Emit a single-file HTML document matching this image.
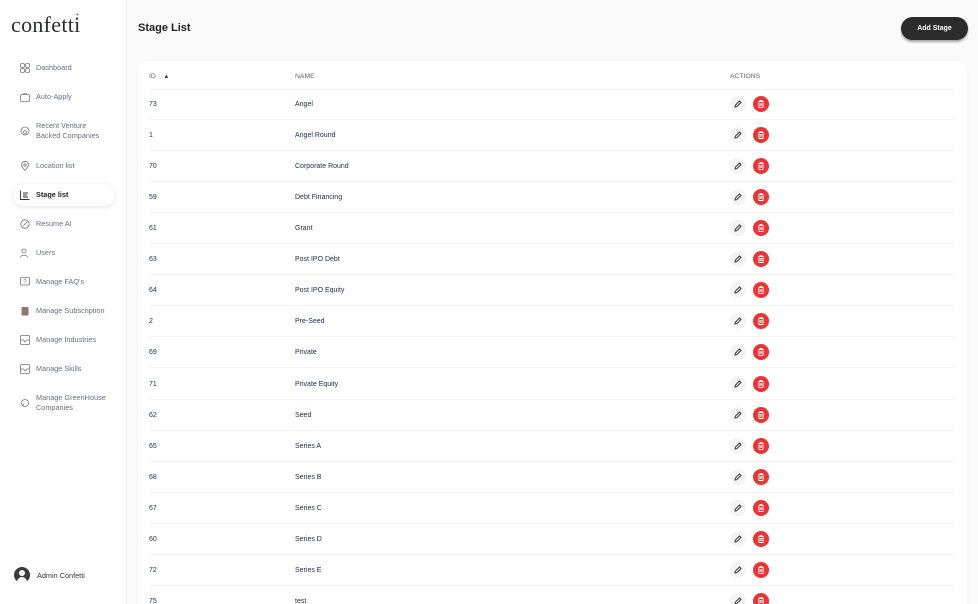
<!DOCTYPE html>
<html style="overflow:hidden;height:604px"><head><style>
*{box-sizing:border-box;margin:0;padding:0}
body{width:978px;height:604px;overflow:hidden;background:#fafafa;font-family:"Liberation Sans",sans-serif;position:relative}
.side{position:absolute;left:0;top:0;width:127px;height:604px;background:#fff;border-right:1px solid #f0f0f0}
.logo{position:absolute;left:11px;top:12px;font-family:"Liberation Serif",serif;font-size:22px;color:#2b2b33;letter-spacing:0.3px}
.nav{position:absolute;left:13px;width:102px;font-size:7.3px;color:#6b6f7a;display:flex;align-items:center;line-height:10px}
.nav svg{position:absolute;left:7px;width:10px;height:10px}
.nav span{margin-left:23px}
.active{background:#fff;border-radius:12px;box-shadow:0 1px 4px rgba(0,0,0,0.12);height:22px;color:#222;font-weight:bold}
h1{position:absolute;left:138px;top:22px;font-size:11px;color:#222;font-weight:bold}
.btn{position:absolute;left:901px;top:17px;width:67px;height:23px;border-radius:12px;background:#2b2b2b;color:#fff;font-size:7px;font-weight:bold;text-align:center;line-height:23px;box-shadow:0 2px 2px rgba(0,0,0,0.35)}
.card{position:absolute;left:138px;top:61px;width:829px;height:560px;background:#fff;border-radius:9px;box-shadow:0 0 3px rgba(0,0,0,0.04)}
.row{position:absolute;left:11px;width:806px;height:31px;border-bottom:1px solid #f1f1f1;font-size:7px;color:#1e2a4a;}
.row div{position:absolute;top:0;line-height:31px}
.hd{color:#666;font-size:6.8px}
.ed{position:absolute;width:16px;height:16px;border-radius:50%;background:#f3f3f3;left:581px;top:7px}
.dl{position:absolute;width:16px;height:16px;border-radius:50%;background:#ee3333;left:604px;top:7px}
.ed svg,.dl svg{position:absolute;left:4px;top:4px;width:8px;height:8px}
.user{position:absolute;left:14px;top:567px;width:16px;height:16px;border-radius:50%;background:#3a3a3a;overflow:hidden}
</style></head><body>
<div class="side">
<div class="logo">confetti<span style="position:absolute;left:64px;top:-2px;font-size:8px;color:#e33">+</span></div>
<div class="nav" style="top:63px"><svg viewBox="0 0 10 10" fill="none" stroke="#777" stroke-width=".8"><rect x=".5" y=".5" width="4" height="4" rx="1.5"/><rect x="5.5" y=".5" width="4" height="4" rx="1.5"/><rect x=".5" y="5.5" width="4" height="4" rx="1.5"/><rect x="5.5" y="5.5" width="4" height="4" rx="1.5"/></svg><span>Dashboard</span></div>
<div class="nav" style="top:92px"><svg viewBox="0 0 10 10" fill="none" stroke="#777" stroke-width=".8"><rect x=".5" y="2.5" width="9" height="7" rx="1.5"/><path d="M3 2.5Q5 0 7 2.5"/></svg><span>Auto-Apply</span></div>
<div class="nav" style="top:121px;height:20px"><svg viewBox="0 0 10 10" fill="none" stroke="#777" stroke-width=".8"><circle cx="5" cy="5" r="4"/><circle cx="5" cy="6" r="1.5"/></svg><span>Recent Venture<br>Backed Companies</span></div>
<div class="nav" style="top:161px"><svg viewBox="0 0 10 10" fill="none" stroke="#777" stroke-width=".8"><path d="M5 9.5C2 6 1.5 5 1.5 3.8a3.5 3.5 0 0 1 7 0C8.5 5 8 6 5 9.5z"/><circle cx="5" cy="4" r="1.2"/></svg><span>Location list</span></div>
<div class="nav active" style="top:184px"><svg viewBox="0 0 10 10" fill="none" stroke="#333" stroke-width=".9"><path d="M.5 .5V9.5H9.5M3 3h5M3 5h4M3 7h5"/></svg><span>Stage list</span></div>
<div class="nav" style="top:219px"><svg viewBox="0 0 10 10" fill="none" stroke="#777" stroke-width=".8"><circle cx="5" cy="5" r="4.2"/><path d="M3.5 6.5l4-4"/></svg><span>Resume AI</span></div>
<div class="nav" style="top:248px"><svg viewBox="0 0 10 10" fill="none" stroke="#777" stroke-width=".8"><circle cx="4" cy="3" r="2"/><path d="M.5 9.5c0-3 7-3 7 0"/></svg><span>Users</span></div>
<div class="nav" style="top:277px"><svg viewBox="0 0 10 10" fill="none" stroke="#777" stroke-width=".8"><rect x=".5" y=".5" width="9" height="7.5" rx="1"/><text x="3.3" y="6.5" font-size="6" fill="#777" stroke="none">?</text></svg><span>Manage FAQ's</span></div>
<div class="nav" style="top:306px"><svg viewBox="0 0 10 10" fill="#8a7a70"><rect x="1.5" y="1" width="7" height="8.5" rx="1"/></svg><span>Manage Subscription</span></div>
<div class="nav" style="top:335px"><svg viewBox="0 0 10 10" fill="none" stroke="#777" stroke-width=".8"><rect x=".5" y=".5" width="9" height="9" rx="1"/><path d="M.5 5h3l1.5 2 1.5-2h3"/></svg><span>Manage Industries</span></div>
<div class="nav" style="top:364px"><svg viewBox="0 0 10 10" fill="none" stroke="#777" stroke-width=".8"><rect x=".5" y=".5" width="9" height="9" rx="1"/><path d="M.5 5h3l1.5 2 1.5-2h3"/></svg><span>Manage Skills</span></div>
<div class="nav" style="top:393px;height:20px"><svg viewBox="0 0 10 10" fill="none" stroke="#777" stroke-width=".8"><circle cx="5" cy="5" r="3.5"/><path d="M2 8l2-2"/></svg><span>Manage GreenHouse<br>Companies</span></div>
<div class="user"><div style="position:absolute;left:5px;top:3px;width:6px;height:6px;border-radius:50%;background:#fff"></div><div style="position:absolute;left:3px;top:10px;width:10px;height:8px;border-radius:5px 5px 0 0;background:#fff"></div></div>
<div style="position:absolute;left:37px;top:571px;font-size:7.3px;color:#333">Admin Confetti</div>
</div>
<h1>Stage List</h1>
<div class="btn">Add Stage</div>
<div class="card">
<div class="row hd" style="top:1px;height:28px"><div style="left:0;line-height:30px">ID &nbsp;&nbsp;&nbsp;<span style="font-size:6px;color:#333">▲</span></div><div style="left:146px;line-height:30px">NAME</div><div style="left:581px;line-height:30px">ACTIONS</div></div>
</div>
<script>
const d=[["73","Angel"],["1","Angel Round"],["70","Corporate Round"],["59","Debt Financing"],["61","Grant"],["63","Post IPO Debt"],["64","Post IPO Equity"],["2","Pre-Seed"],["69","Private"],["71","Private Equity"],["62","Seed"],["65","Series A"],["68","Series B"],["67","Series C"],["60","Series D"],["72","Series E"],["75","test"]];
let h="";d.forEach((r,i)=>{h+=`<div class="row" style="top:${28+i*31.06}px"><div style="left:0">${r[0]}</div><div style="left:146px">${r[1]}</div><span class="ed"><svg viewBox="0 0 8 8" fill="none" stroke="#333" stroke-width="1"><path d="M1 7l.3-1.8L5.5 1l1.5 1.5L2.8 6.7z"/></svg></span><span class="dl"><svg viewBox="0 0 8 8" fill="none" stroke="#fff" stroke-width=".9"><rect x="1.8" y="1.5" width="4.4" height="6" rx=".5"/><path d="M3 1V.5h2V1M3.2 3v3M4.8 3v3"/></svg></span></div>`});
document.querySelector('.card').insertAdjacentHTML('beforeend',h);
</script>
</body></html>
